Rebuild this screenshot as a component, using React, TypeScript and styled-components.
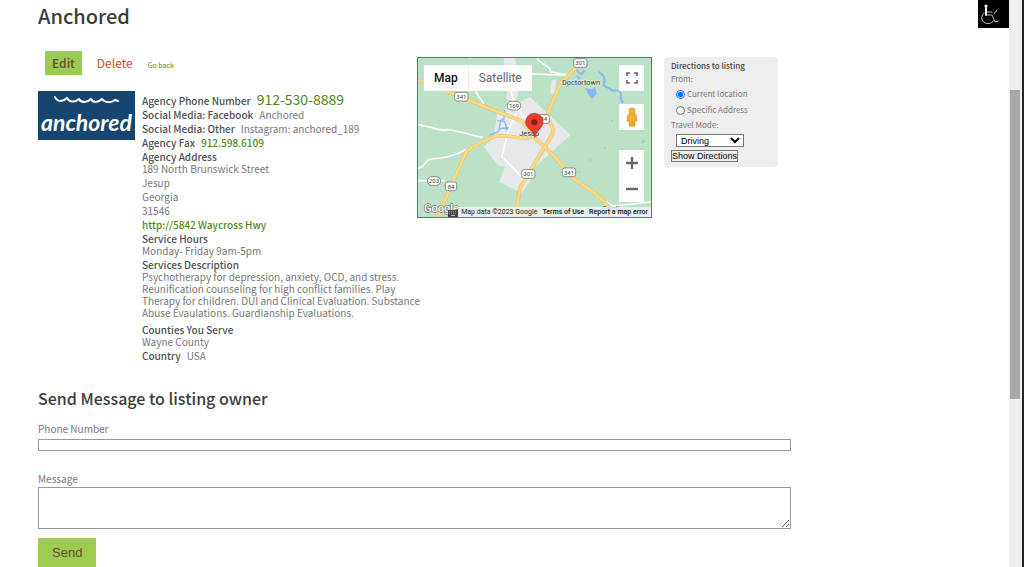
import React from "react";
import styled, { createGlobalStyle } from "styled-components";

const GlobalStyle = createGlobalStyle`
  *, *::before, *::after { box-sizing: border-box; }
  body {
    margin: 0;
    background: #fff;
    color: #777;
    font-family: "Noto Sans CJK SC", "Noto Sans", sans-serif;
    font-size: 10px;
    line-height: 12px;
  }
  h1, h2, h3, p, dl, dd, fieldset { margin: 0; padding: 0; border: 0; }
  a { color: #4f8a20; text-decoration: none; }
  button, input, select, textarea { margin: 0; }
`;

const Page = styled.div`
  display: flex;
  min-height: 100vh;
`;

const Main = styled.main`
  flex: 1;
  min-width: 0;
  padding-left: 38px;
`;

const TopBar = styled.header`
  display: flex;
  justify-content: space-between;
  align-items: flex-start;
  height: 51px;
`;

const Title = styled.h1`
  padding-top: 1px;
  font-size: 20px;
  line-height: 30px;
  font-weight: 500;
  color: #3c3c3c;
`;

const AccessButton = styled.button`
  width: 31px;
  height: 28px;
  padding: 0;
  border: 0;
  background: #000;
  svg { display: block; }
`;

const Columns = styled.div`
  display: flex;
  align-items: flex-start;
`;

const ListingColumn = styled.section`
  flex: none;
  width: 379px;
`;

const Actions = styled.nav`
  display: flex;
  align-items: baseline;
  gap: 15px;
  height: 24px;
  padding-left: 7px;
`;

const EditLink = styled.a`
  padding: 0 7px;
  background: #9bcb50;
  color: #6b4a35;
  font-size: 12px;
  line-height: 24px;
  font-weight: 500;
`;

const DeleteLink = styled.a`
  color: #d04a30;
  font-size: 12px;
  line-height: 24px;
`;

const BackLink = styled.a`
  font-size: 7px;
  line-height: 12px;
`;

const Listing = styled.div`
  display: flex;
  align-items: flex-start;
  gap: 7px;
  margin-top: 16px;
`;

const Logo = styled.svg`
  flex: none;
  display: block;
  background: #16466f;
`;

const Details = styled.dl`
  display: flex;
  flex: none;
  flex-direction: column;
  gap: 2px;
  width: 284px;
  padding-top: 2px;
`;

const Row = styled.div<{ $stacked?: boolean }>`
  display: ${(p) => (p.$stacked ? "block" : "flex")};
  gap: 6px;
  align-items: baseline;
`;

const Label = styled.dt`
  font-weight: 500;
  color: #505050;
`;

const Value = styled.dd``;

const PhoneLink = styled.a`
  font-size: 14px;
  line-height: 12px;
`;

const BoldLink = styled.a`
  font-weight: 500;
`;

const AddressLines = styled.dd`
  display: flex;
  flex-direction: column;
  gap: 2px;
`;

const Description = styled(Value)`
  padding-bottom: 3px;
`;

const MapFrame = styled.section`
  position: relative;
  flex: none;
  width: 235px;
  height: 161px;
  margin-top: 6px;
  border: 1px solid #4a7a95;
  overflow: hidden;
  font-family: Roboto, sans-serif;
`;

const MapDrawing = styled.svg`
  display: block;
  width: 100%;
  height: 100%;
`;

const MapTypes = styled.div`
  position: absolute;
  top: 7px;
  left: 6px;
  display: flex;
  background: #fff;
`;

const MapTypeButton = styled.button<{ $active?: boolean }>`
  height: 26px;
  padding: 0 10px;
  border: 0;
  border-right: ${(p) => (p.$active ? "1px solid #eee" : "0")};
  background: transparent;
  font: ${(p) => (p.$active ? 500 : 400)} 12px/26px Roboto, sans-serif;
  color: ${(p) => (p.$active ? "#111" : "#666")};
`;

const MapControls = styled.div`
  position: absolute;
  top: 7px;
  right: 7px;
  display: flex;
  flex-direction: column;
`;

const ControlButton = styled.button<{ $gap?: number }>`
  width: 25px;
  height: 26px;
  margin-top: ${(p) => p.$gap ?? 0}px;
  padding: 0;
  border: 0;
  background: #fff;
  svg { display: block; margin: 0 auto; }
`;

const MapFooter = styled.div`
  position: absolute;
  right: 0;
  bottom: 0;
  display: flex;
  color: #222;
  font-size: 7px;
  line-height: 10px;
  svg { display: block; }
`;

const FooterText = styled.div`
  display: flex;
  gap: 5px;
  padding: 0 3px;
  background: rgba(245, 245, 245, 0.75);
  a { color: #111; font-weight: 500; }
`;

const Directions = styled.form`
  display: flex;
  flex-direction: column;
  align-items: flex-start;
  width: 114px;
  margin: 6px 0 0 12px;
  padding: 2px 7px 5px;
  border-radius: 4px;
  background: #eee;
  font-size: 8px;
`;

const DirectionsTitle = styled.h3`
  font-size: 8px;
  line-height: 13px;
  font-weight: 500;
  color: #444;
`;

const FieldLine = styled.div`
  line-height: 14px;
`;

const Choice = styled.label`
  display: flex;
  align-items: center;
  gap: 2px;
  height: 16px;
  padding-left: 5px;
  line-height: 16px;
  input { width: 9px; height: 9px; }
`;

const ModeSelect = styled.select`
  width: 68px;
  height: 13px;
  margin: 2px 0 0 5px;
  padding: 0;
  border: 1px solid #777;
  border-radius: 0;
  background: #fff;
  color: #000;
  font: 9px/10px "Liberation Sans", Arial, sans-serif;
`;

const ShowButton = styled.button`
  height: 12px;
  margin-top: 3px;
  padding: 0;
  border: 1px solid #777;
  background: #eee;
  color: #000;
  font: 9px/10px "Liberation Sans", Arial, sans-serif;
`;

const MessageForm = styled.form`
  display: flex;
  flex-direction: column;
  align-items: flex-start;
  width: calc(100% - 218px);
  margin-top: 23px;
`;

const FormTitle = styled.h2`
  font-size: 16px;
  line-height: 26px;
  font-weight: 500;
  color: #3c3c3c;
`;

const FormLabel = styled.label`
  margin-top: 11px;
  line-height: 14px;
`;

const PhoneInput = styled.input`
  width: 100%;
  height: 12px;
  margin: 3px 0 10px;
  padding: 0 2px;
  border: 1px solid #999;
  font-size: 9px;
`;

const MessageInput = styled.textarea`
  width: 100%;
  height: 42px;
  margin-top: 1px;
  border: 1px solid #999;
  resize: vertical;
`;

const SendButton = styled.button`
  height: 29px;
  margin-top: 9px;
  padding: 0 14px;
  border: 0;
  background: #9bcb50;
  color: #6b4a35;
  font: 13px/29px "Liberation Sans", Arial, sans-serif;
`;

const ScrollTrack = styled.div`
  width: 15px;
  padding: 90px 2px 0 1px;
  background: #f0f0f0;
  border-right: 2px solid #202224;
`;

const ScrollThumb = styled.div`
  height: 309px;
  background: #a8a8a8;
`;

function AnchoredLogo() {
  return (
    <Logo width="97" height="49" viewBox="0 0 97 49" role="img" aria-label="Anchored">
      <path
        d="M17 6c2 5 8 5 12 1 2 4 8 5 12 1 2 4 8 4 12 0 2 4 7 4 11 0 3 4 9 4 13 1l3 1"
        fill="none" stroke="#fff" strokeWidth="2" strokeLinecap="round" strokeLinejoin="round"
      />
      <text x="3" y="40" fill="#fff" fontFamily="Lato, sans-serif" fontSize="23" fontStyle="italic" fontWeight="700">
        anchored
      </text>
    </Logo>
  );
}

type ShieldProps = { x: number; y: number; text: string; round?: boolean };

function Shield({ x, y, text, round }: ShieldProps) {
  const w = text.length > 2 ? 40 : 34;
  return (
    <g>
      <rect x={x - w / 2} y={y - 13} width={w} height="26" rx={round ? 13 : 7} fill="#fff" stroke="#777" strokeWidth="2.5" />
      <text x={x} y={y + 7} fontSize="18" fill="#444" textAnchor="middle">{text}</text>
    </g>
  );
}

function MapCanvas() {
  return (
    <MapDrawing viewBox="24 24 699 477" preserveAspectRatio="xMidYMid slice" aria-hidden="true" fontFamily="Roboto, sans-serif">
      <rect x="0" y="0" width="760" height="530" fill="#bbe2c6" />
      <path d="M360 140 482 255 370 355 378 368 335 430 268 395 285 350 262 345 222 290 250 265 262 192 315 165zM425 92l14-6-4 40-14 8zM280 24h36l14 90-14 40-26-6 2-60z" fill="#e6e8ec" />
      <g fill="none" stroke="#8ab8f0" strokeWidth="4" strokeLinejoin="round">
        <path d="M238 256l28-12 6-32 10-6 2-26M262 212l22 2 6 20-24 2" />
        <path d="M500 60l14 14 10-14M566 66c14 6 22 22 16 32s10 14 18 18c8 14 20-2 30 10 10 14-8 16 10 32" strokeWidth="6" />
        <path d="M470 110l12-10" />
      </g>
      <path d="M526 114l18 4 12-6 4 20-14 14-12-14zM498 76l14 6-6 8zM286 232h14v8h-14z" fill="#8ab4f8" />
      <g fill="#9dc7ef">
        <circle cx="584" cy="294" r="3" /><circle cx="508" cy="366" r="3" /><circle cx="606" cy="212" r="3" />
        <circle cx="700" cy="275" r="4" /><circle cx="540" cy="330" r="3" />
      </g>
      <g fill="none" stroke="#fff" strokeWidth="5" strokeLinejoin="round">
        <path d="M24 224l40 8c30 16 50 0 76 12 30 4 50 14 78 18" />
        <path d="M24 354c26 0 14-24 46-28 30 0 60-6 100-28" />
        <path d="M24 392h80M196 124l26 38M176 24c20 0 20-16 36-14" />
        <path d="M300 60l24 10 160 6M300 60c-6 40 6 80 14 106l46 56" />
        <path d="M318 190l-26 60-16 70 66 68" />
        <path d="M560 440l50 28 112-12M380 24c10 20 34 16 44 42l60 10" />
      </g>
      <g fill="none" strokeLinejoin="round" strokeLinecap="round">
        <g stroke="#eec268" strokeWidth="11">
          <path d="M24 90c50 14 90 38 140 54 60 28 110 46 170 68l40 50 60 58 40 48c30 40 70 40 116 96" />
          <path d="M84 501l40-96 46-102c30-20 60-34 90-46 40-2 80 14 104 4" />
          <path d="M316 501l14-88 24-40 72-118c10-24-6-40-22-52l10-16 40-90 60-60" />
        </g>
        <g stroke="#fbdc84" strokeWidth="7">
          <path d="M24 90c50 14 90 38 140 54 60 28 110 46 170 68l40 50 60 58 40 48c30 40 70 40 116 96" />
          <path d="M84 501l40-96 46-102c30-20 60-34 90-46 40-2 80 14 104 4" />
          <path d="M316 501l14-88 24-40 72-118c10-24-6-40-22-52l10-16 40-90 60-60" />
        </g>
      </g>
      <Shield x={511} y={39} text="301" />
      <Shield x={154} y={140} text="341" />
      <Shield x={312} y={167} text="169" round />
      <Shield x={401} y={207} text="84" />
      <Shield x={355} y={372} text="301" />
      <Shield x={477} y={367} text="341" />
      <Shield x={72} y={393} text="203" round />
      <Shield x={123} y={409} text="84" />
      <g fill="#333" stroke="#e8f3ea" strokeWidth="3" paintOrder="stroke" fontSize="22">
        <text x="456" y="105">Doctortown</text>
        <text x="328" y="257">Jesup</text>
        <text x="576" y="484">Gardi</text>
      </g>
      <path d="M374 262c-2-20-27-26-27-46a26 26 0 0 1 52 0c0 20-23 26-25 46z" fill="#e53b31" stroke="#b8281f" strokeWidth="2" />
      <circle cx="373" cy="217" r="9" fill="#8f1712" />
      <text x="42" y="487" fontSize="33" fontWeight="500" fill="#fff" stroke="#777" strokeWidth="4" paintOrder="stroke">Google</text>
    </MapDrawing>
  );
}

function MapPanel() {
  return (
    <MapFrame aria-label="Map">
      <MapCanvas />
      <MapTypes>
        <MapTypeButton type="button" $active>Map</MapTypeButton>
        <MapTypeButton type="button">Satellite</MapTypeButton>
      </MapTypes>
      <MapControls>
        <ControlButton type="button" aria-label="Full screen">
          <svg width="12" height="12" viewBox="0 0 12 12" fill="none" stroke="#666" strokeWidth="1.6">
            <path d="M1 4V1h3M8 1h3v3M11 8v3H8M4 11H1V8" />
          </svg>
        </ControlButton>
        <ControlButton type="button" aria-label="Street view" $gap={13}>
          <svg width="12" height="20" viewBox="0 0 12 20">
            <path d="M2 8c0-2 8-2 8 0l1 6-2 0-.5 5h-5L3 14l-2 0z" fill="#f5b32d" stroke="#d98a1c" strokeWidth=".8" />
            <circle cx="6" cy="4" r="3" fill="#f7b733" stroke="#d98a1c" strokeWidth=".8" />
            <path d="M6 14v5" stroke="#d98a1c" />
          </svg>
        </ControlButton>
        <ControlButton type="button" aria-label="Zoom in" $gap={20}>
          <svg width="12" height="12" viewBox="0 0 12 12" stroke="#666" strokeWidth="2.4">
            <path d="M6 0v12M0 6h12" />
          </svg>
        </ControlButton>
        <ControlButton type="button" aria-label="Zoom out">
          <svg width="12" height="12" viewBox="0 0 12 12" stroke="#666" strokeWidth="2.4">
            <path d="M0 6h12" />
          </svg>
        </ControlButton>
      </MapControls>
      <MapFooter>
        <svg width="10" height="10" viewBox="0 0 10 10" aria-hidden="true">
          <rect y="3" width="10" height="7" fill="#444" />
          <path d="M1 4.500h8M1 6.500h8" stroke="#bbb" strokeWidth=".8" strokeDasharray="1 1" />
          <path d="M3 8.500h4" stroke="#ddd" strokeWidth=".8" />
        </svg>
        <FooterText>
          <span>Map data ©2023 Google</span>
          <a href="#terms">Terms of Use</a>
          <a href="#report">Report a map error</a>
        </FooterText>
      </MapFooter>
    </MapFrame>
  );
}

export default function App() {
  return (
    <>
      <GlobalStyle />
      <Page>
        <Main>
          <TopBar>
            <Title>Anchored</Title>
            <AccessButton type="button" aria-label="Accessibility">
              <svg width="31" height="28" viewBox="0 0 31 28" fill="none" stroke="#bbb" strokeLinecap="round">
                <circle cx="8" cy="6" r="1.6" fill="#fff" stroke="none" />
                <path d="M8 8v7" stroke="#fff" strokeWidth="2" />
                <path d="M8 15h6l3 7 3-1M9 12h5" />
                <path d="M6 13a6.500 6 0 1 0 9.500 8M19 10l-3 4" />
              </svg>
            </AccessButton>
          </TopBar>
          <Columns>
            <ListingColumn>
              <Actions>
                <EditLink href="#edit">Edit</EditLink>
                <DeleteLink href="#delete">Delete</DeleteLink>
                <BackLink href="#back">Go back</BackLink>
              </Actions>
              <Listing>
                <AnchoredLogo />
                <Details>
                  <Row><Label>Agency Phone Number</Label><Value><PhoneLink href="tel:9125308889">912-530-8889</PhoneLink></Value></Row>
                  <Row><Label>Social Media: Facebook</Label><Value>Anchored</Value></Row>
                  <Row><Label>Social Media: Other</Label><Value>Instagram: anchored_189</Value></Row>
                  <Row><Label>Agency Fax</Label><Value><BoldLink href="tel:9125986109">912.598.6109</BoldLink></Value></Row>
                  <Row $stacked>
                    <Label>Agency Address</Label>
                    <AddressLines>
                      <span>189 North Brunswick Street</span>
                      <span>Jesup</span>
                      <span>Georgia</span>
                      <span>31546</span>
                      <BoldLink href="#website">http://5842 Waycross Hwy</BoldLink>
                    </AddressLines>
                  </Row>
                  <Row $stacked><Label>Service Hours</Label><Value>Monday- Friday 9am-5pm</Value></Row>
                  <Row $stacked>
                    <Label>Services Description</Label>
                    <Description>
                      Psychotherapy for depression, anxiety, OCD, and stress. Reunification counseling for high
                      conflict families. Play Therapy for children. DUI and Clinical Evaluation. Substance Abuse
                      Evaulations. Guardianship Evaluations.
                    </Description>
                  </Row>
                  <Row $stacked><Label>Counties You Serve</Label><Value>Wayne County</Value></Row>
                  <Row><Label>Country</Label><Value>USA</Value></Row>
                </Details>
              </Listing>
            </ListingColumn>
            <MapPanel />
            <Directions>
              <DirectionsTitle>Directions to listing</DirectionsTitle>
              <FieldLine>From:</FieldLine>
              <Choice><input type="radio" name="from" defaultChecked />Current location</Choice>
              <Choice><input type="radio" name="from" />Specific Address</Choice>
              <FieldLine as="label" htmlFor="mode">Travel Mode:</FieldLine>
              <ModeSelect id="mode" defaultValue="Driving">
                <option>Driving</option>
                <option>Walking</option>
              </ModeSelect>
              <ShowButton type="button">Show Directions</ShowButton>
            </Directions>
          </Columns>
          <MessageForm>
            <FormTitle>Send Message to listing owner</FormTitle>
            <FormLabel htmlFor="phone">Phone Number</FormLabel>
            <PhoneInput id="phone" type="tel" />
            <FormLabel htmlFor="message">Message</FormLabel>
            <MessageInput id="message" />
            <SendButton type="button">Send</SendButton>
          </MessageForm>
        </Main>
        <ScrollTrack aria-hidden="true">
          <ScrollThumb />
        </ScrollTrack>
      </Page>
    </>
  );
}
